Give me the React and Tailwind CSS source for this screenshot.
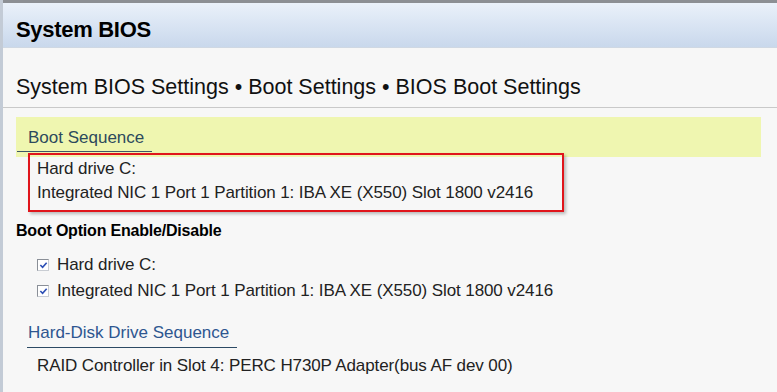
import React from "react";

const Check = () => (
    <span className="w-[12px] h-[12px] border border-[#8a8f97] border-r-[#c9cdd3] border-b-[#c9cdd3] bg-white flex items-center justify-center mr-[8px]">
        <svg viewBox="0 0 10 10" className="w-[9px] h-[9px]">
            <path d="M1.5 4.5 L4 7 L8.5 2" fill="none" stroke="#2d4fb5" strokeWidth="1.8" />
        </svg>
    </span>
);

const App = () => {
    return (
        <div
            className="w-[777px] h-[392px] overflow-hidden bg-[#f7f7f7] border-l-[3px] border-[#c3cbd6] text-[#1a1a1a]"
            style={{ fontFamily: '"Liberation Sans", Arial, sans-serif' }}
        >
            {/* Title bar */}
            <div className="h-[48px] border-t-[3px] border-[#8c8f94] border-b border-b-[#cfd8e3] bg-gradient-to-b from-[#eaf1fa] to-[#c9d8ec] flex items-center pt-[10px] pl-[13px]">
                <h1 className="text-[22px] leading-[24px] font-bold tracking-[-0.3px] text-black">System BIOS</h1>
            </div>

            {/* Breadcrumb */}
            <div className="h-[60px] border-b border-[#c9c9c9] flex items-end pb-[7px] pl-[13px]">
                <h2 className="text-[21.5px] leading-[26px] text-[#111]">
                    System BIOS Settings • Boot Settings • BIOS Boot Settings
                </h2>
            </div>

            <div className="pl-[13px] pt-[9px]">
                {/* Boot Sequence */}
                <div className="w-[745px] h-[40px] bg-[#eff6b0] flex items-end">
                    <div className="ml-[1px] mb-[5px] pl-[11px] pr-[8px] pb-[3px] border-b border-[#3d5566] text-[17px] text-[#2c4a5c] leading-[20px]">
                        Boot Sequence
                    </div>
                </div>
                <div className="-mt-[4px] ml-[12px] w-[536px] h-[59px] border-2 border-[#e0151b] shadow-[2px_2px_3px_rgba(0,0,0,0.25)] flex flex-col pt-[4px] pl-[7px] gap-[4px] text-[17px] leading-[20px] tracking-[-0.1px] text-[#222]">
                    <div>Hard drive C:</div>
                    <div>Integrated NIC 1 Port 1 Partition 1: IBA XE (X550) Slot 1800 v2416</div>
                </div>

                {/* Boot Option Enable/Disable */}
                <div className="mt-[9px] text-[16px] font-bold leading-[20px] tracking-[-0.2px] text-black">
                    Boot Option Enable/Disable
                </div>
                <div className="mt-[14px] ml-[21px] flex flex-col gap-[6px] text-[17px] leading-[20px] tracking-[-0.1px] text-[#222]">
                    <div className="flex items-center">
                        <Check />
                        <span>Hard drive C:</span>
                    </div>
                    <div className="flex items-center">
                        <Check />
                        <span>Integrated NIC 1 Port 1 Partition 1: IBA XE (X550) Slot 1800 v2416</span>
                    </div>
                </div>

                {/* Hard-Disk Drive Sequence */}
                <div className="mt-[22px] ml-[11px] inline-block pl-[1px] pr-[8px] pb-[4px] border-b border-[#2c4a64] text-[17px] leading-[20px] text-[#2e5690]">
                    Hard-Disk Drive Sequence
                </div>
                <div className="mt-[8px] ml-[21px] text-[17px] leading-[20px] tracking-[-0.1px] text-[#222]">
                    RAID Controller in Slot 4: PERC H730P Adapter(bus AF dev 00)
                </div>
            </div>
        </div>
    );
};

export default App;
